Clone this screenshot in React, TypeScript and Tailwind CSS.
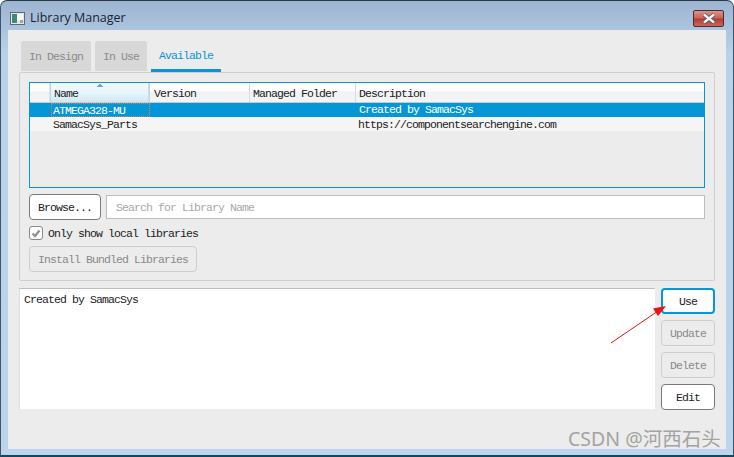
import React from "react";

const mono = "font-['Liberation_Mono',monospace] text-[11.5px] tracking-[-0.9px] leading-[14px]";

function Btn({ label, w, kind }: { label: string; w: string; kind: "normal" | "disabled" | "focus" }) {
  const cls =
    kind === "normal"
      ? "bg-white border border-[#7a7a7a] text-[#222]"
      : kind === "focus"
      ? "bg-white border-2 border-[#0596d7] text-[#222]"
      : "bg-[#ececec] border border-[#cfcfcf] text-[#8a8a8a]";
  return (
    <div className={`${w} h-[26px] pt-[2px] rounded-[4px] flex items-center justify-center shrink-0 ${cls} ${mono}`}>{label}</div>
  );
}

function Tab({ label, active }: { label: string; active?: boolean }) {
  if (active)
    return (
      <div className="w-[70px] h-[31px] pt-[2px] border-b-[3px] border-[#0596d7] text-[#0596d7] flex items-center justify-center">
        <span className={mono}>{label}</span>
      </div>
    );
  return (
    <div className="h-[30px] pt-[2px] bg-[#d8d8d8] rounded-t-[2px] text-[#8c8c8c] flex items-center justify-center mr-[4px] first:w-[70px] w-[52px]">
      <span className={mono}>{label}</span>
    </div>
  );
}

function HeadCell({ label, w, sort, pad }: { label: string; w: string; sort?: boolean; pad: string }) {
  return (
    <div className={`${w} relative h-full border-r border-[#d5dde3] ${pad} pt-[4px] text-[#222] shrink-0 ${mono}`}>
      {sort && (
        <svg className="absolute left-[45px] top-0" width="8" height="5" viewBox="0 0 8 5">
          <path d="M4 0.5 L7.5 4 L0.5 4 Z" fill="#6f9fc0" />
        </svg>
      )}
      {label}
    </div>
  );
}

export default function App() {
  return (
    <div className="w-[734px] h-[457px] bg-white overflow-hidden">
      <div className="w-full h-full rounded-t-[7px] border-t border-x border-b-2 border-t-[#2b3a47] border-x-[#3f5568] border-b-[#12485a] bg-[linear-gradient(180deg,#9db5d1_0%,#b9d1ea_12%,#bcd4ee_100%)] flex flex-col">
        {/* Title bar */}
        <div className="h-[29px] flex items-center pl-[9px] pr-[9px] shrink-0">
          <svg width="15" height="13" viewBox="0 0 15 13" className="shrink-0 mt-[5px]">
            <rect x="0.5" y="0.5" width="14" height="12" fill="#e6e6e6" stroke="#5c6a72" />
            <rect x="2" y="2" width="5" height="9" fill="#3d8a78" />
            <rect x="7" y="2" width="6" height="6" fill="#f7f7f7" />
            <rect x="10" y="8" width="3" height="3" fill="#9aa5ad" />
          </svg>
          <span className="ml-[5px] mt-[6px] font-['Open_Sans',sans-serif] text-[12.5px] text-[#1a2430]">Library Manager</span>
          <div className="ml-auto mt-[6px] w-[31px] h-[17px] rounded-[2px] border border-[#4d2a35] bg-[linear-gradient(180deg,#d9938a_0%,#c8665a_45%,#b43c30_55%,#c9695c_100%)] flex items-center justify-center">
            <svg width="16" height="11" viewBox="0 0 16 11">
              <path d="M3 1.5 L13 9.5 M13 1.5 L3 9.5" stroke="#4b4f55" strokeWidth="4" />
              <path d="M3 1.5 L13 9.5 M13 1.5 L3 9.5" stroke="#f4f4f4" strokeWidth="2.4" />
            </svg>
          </div>
        </div>
        {/* Client */}
        <div className="relative mx-[7px] h-[419px] bg-[#ececec] px-[11px] pt-[11px] flex flex-col shrink-0">
          {/* Tabs */}
          <div className="flex items-start h-[31px] pl-[2px] shrink-0">
            <Tab label="In Design" />
            <Tab label="In Use" />
            <Tab label="Available" active />
          </div>
          {/* Panel */}
          <div className="h-[209px] w-[696px] border border-[#cfcfcf] rounded-[2px] px-[9px] pt-[9px] flex flex-col shrink-0">
            {/* Table */}
            <div className="h-[106px] w-[676px] border border-[#0596d7] flex flex-col shrink-0">
              <div className="h-[20px] flex border-b border-[#c9c9c9] bg-[linear-gradient(180deg,#ffffff_0%,#ffffff_40%,#f1f2f3_50%,#f4f5f6_100%)] shrink-0">
                <div className="w-[20px] h-full border-r border-[#e3e3e3] shrink-0" />
                <div className="w-[100px] h-full shrink-0 bg-[linear-gradient(180deg,#f2f9fd_0%,#e8f5fb_50%,#cfe8f5_100%)] border-x border-[#b5d8ea]">
                  <HeadCell label="Name" w="w-full" sort pad="pl-[3px]" />
                </div>
                <HeadCell label="Version" w="w-[100px]" pad="pl-[4px]" />
                <HeadCell label="Managed Folder" w="w-[106px]" pad="pl-[3px]" />
                <div className={`pl-[3px] pt-[4px] text-[#222] ${mono}`}>Description</div>
              </div>
              <div className="h-[14px] bg-[#0596d7] flex text-white shrink-0">
                <div className="w-[21px] shrink-0" />
                <div className={`w-[99px] border border-dotted border-[#e8813c] pl-[1px] leading-[12px] shrink-0 ${mono}`}>ATMEGA328-MU</div>
                <div className="w-[205px] shrink-0" />
                <div className={`pl-[4px] ${mono}`}>Created by SamacSys</div>
              </div>
              <div className="h-[14px] pt-[1px] bg-[#f5f5f5] flex text-[#222] shrink-0">
                <div className="w-[23px] shrink-0" />
                <div className={`w-[305px] shrink-0 ${mono}`}>SamacSys_Parts</div>
                <div className={mono}>https://componentsearchengine.com</div>
              </div>
            </div>
            {/* Browse row */}
            <div className="flex items-center gap-[5px] mt-[6px] shrink-0">
              <Btn label="Browse..." w="w-[72px]" kind="normal" />
              <div className={`w-[599px] h-[24px] pt-[2px] bg-white border border-[#bdbdbd] flex items-center pl-[9px] text-[#a8a8a8] ${mono}`}>
                Search for Library Name
              </div>
            </div>
            {/* Checkbox */}
            <div className="flex items-center mt-[6px] h-[14px] shrink-0">
              <div className="w-[14px] h-[14px] bg-white border border-[#8a8a8a] rounded-[3px] flex items-center justify-center">
                <svg width="10" height="9" viewBox="0 0 10 9">
                  <path d="M1.5 4.5 L4 7 L8.5 1.5" fill="none" stroke="#8f8f8f" strokeWidth="2.2" />
                </svg>
              </div>
              <span className={`ml-[5px] pt-[1px] text-[#222] ${mono}`}>Only show local libraries</span>
            </div>
            <div className="mt-[6px] shrink-0">
              <Btn label="Install Bundled Libraries" w="w-[168px]" kind="disabled" />
            </div>
          </div>
          {/* Bottom */}
          <div className="flex mt-[7px] shrink-0">
            <div className={`w-[636px] h-[121px] bg-white border-t border-l border-t-[#bdbdbd] border-l-[#dcdcdc] pl-[4px] pt-[4px] text-[#222] shrink-0 ${mono}`}>
              Created by SamacSys
            </div>
            <div className="ml-[6px] flex flex-col gap-[6px] shrink-0">
              <Btn label="Use" w="w-[54px]" kind="focus" />
              <Btn label="Update" w="w-[54px]" kind="disabled" />
              <Btn label="Delete" w="w-[54px]" kind="disabled" />
              <Btn label="Edit" w="w-[54px]" kind="normal" />
            </div>
          </div>
        </div>
      </div>
      {/* Annotation arrow */}
      <svg className="absolute left-[600px] top-[300px]" width="70" height="50" viewBox="0 0 70 50">
        <path d="M11 43 L58 11" stroke="#f01010" strokeWidth="1" fill="none" />
        <path d="M66 6 L53 8.5 L58 16 Z" fill="#f01010" />
      </svg>
      {/* Watermark */}
      <div className="absolute left-[568px] top-[427px] font-['Noto_Sans','Noto_Sans_CJK_SC',sans-serif] text-[19.5px] leading-[24px] text-[#a3a3a3] whitespace-nowrap">
        CSDN @河西石头
      </div>
    </div>
  );
}
